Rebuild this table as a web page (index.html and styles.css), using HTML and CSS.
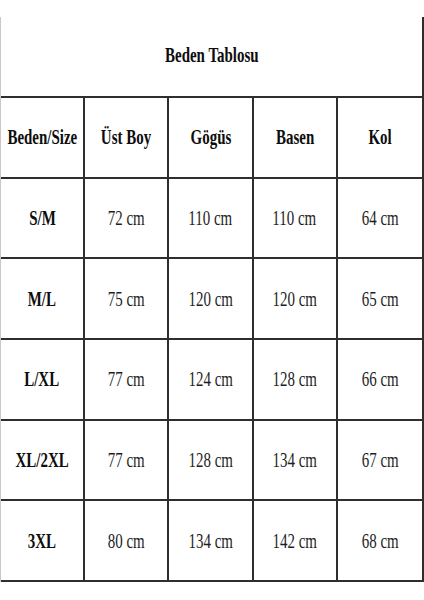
FILE: index.html
```html
<!DOCTYPE html>
<html lang="tr">
<head>
<meta charset="utf-8">
<title>Beden Tablosu</title>
<link rel="stylesheet" href="styles.css">
</head>
<body>
<div class="chart">
  <div class="title"><span class="t b">Beden Tablosu</span></div>

  <div class="cell"><span class="t b">Beden/Size</span></div>
  <div class="cell"><span class="t b">Üst Boy</span></div>
  <div class="cell"><span class="t b">Gögüs</span></div>
  <div class="cell"><span class="t b">Basen</span></div>
  <div class="cell"><span class="t b">Kol</span></div>

  <div class="cell"><span class="t b">S/M</span></div>
  <div class="cell"><span class="t">72 cm</span></div>
  <div class="cell"><span class="t">110 cm</span></div>
  <div class="cell"><span class="t">110 cm</span></div>
  <div class="cell"><span class="t">64 cm</span></div>

  <div class="cell"><span class="t b">M/L</span></div>
  <div class="cell"><span class="t">75 cm</span></div>
  <div class="cell"><span class="t">120 cm</span></div>
  <div class="cell"><span class="t">120 cm</span></div>
  <div class="cell"><span class="t">65 cm</span></div>

  <div class="cell"><span class="t b">L/XL</span></div>
  <div class="cell"><span class="t">77 cm</span></div>
  <div class="cell"><span class="t">124 cm</span></div>
  <div class="cell"><span class="t">128 cm</span></div>
  <div class="cell"><span class="t">66 cm</span></div>

  <div class="cell"><span class="t b">XL/2XL</span></div>
  <div class="cell"><span class="t">77 cm</span></div>
  <div class="cell"><span class="t">128 cm</span></div>
  <div class="cell"><span class="t">134 cm</span></div>
  <div class="cell"><span class="t">67 cm</span></div>

  <div class="cell"><span class="t b">3XL</span></div>
  <div class="cell"><span class="t">80 cm</span></div>
  <div class="cell"><span class="t">134 cm</span></div>
  <div class="cell"><span class="t">142 cm</span></div>
  <div class="cell"><span class="t">68 cm</span></div>
</div>
</body>
</html>
```

FILE: styles.css
```css
html, body {
  margin: 0;
  padding: 0;
  background: #ffffff;
}

body {
  width: 424px;
  height: 600px;
  overflow: hidden;
  font-family: "Liberation Serif", "Times New Roman", serif;
}

.chart {
  margin-top: 17px;
  width: 424px;
  box-sizing: border-box;
  display: grid;
  grid-template-columns: repeat(5, minmax(0, 1fr));
  grid-template-rows: 81px repeat(6, 80.7px);
  border-left: 1px solid #c8c8c8;
  border-right: 2px solid #2e2e2e;
}

.title {
  grid-column: 1 / -1;
  display: flex;
  align-items: center;
  justify-content: center;
  border-bottom: 2px solid #2e2e2e;
  box-sizing: border-box;
  padding-bottom: 3px;
}

.cell {
  min-width: 0;
  display: flex;
  align-items: center;
  justify-content: center;
  box-sizing: border-box;
  border-bottom: 2px solid #2e2e2e;
  border-right: 2px solid #2e2e2e;
  white-space: nowrap;
}

.cell:nth-child(5n + 1) {
  border-right: none;
}

.t {
  display: inline-block;
  font-size: 22px;
  line-height: 1;
  color: #1e1e1e;
  transform: scaleX(0.68);
  white-space: nowrap;
}

.b {
  font-weight: bold;
  color: #0d0d0d;
}
```
